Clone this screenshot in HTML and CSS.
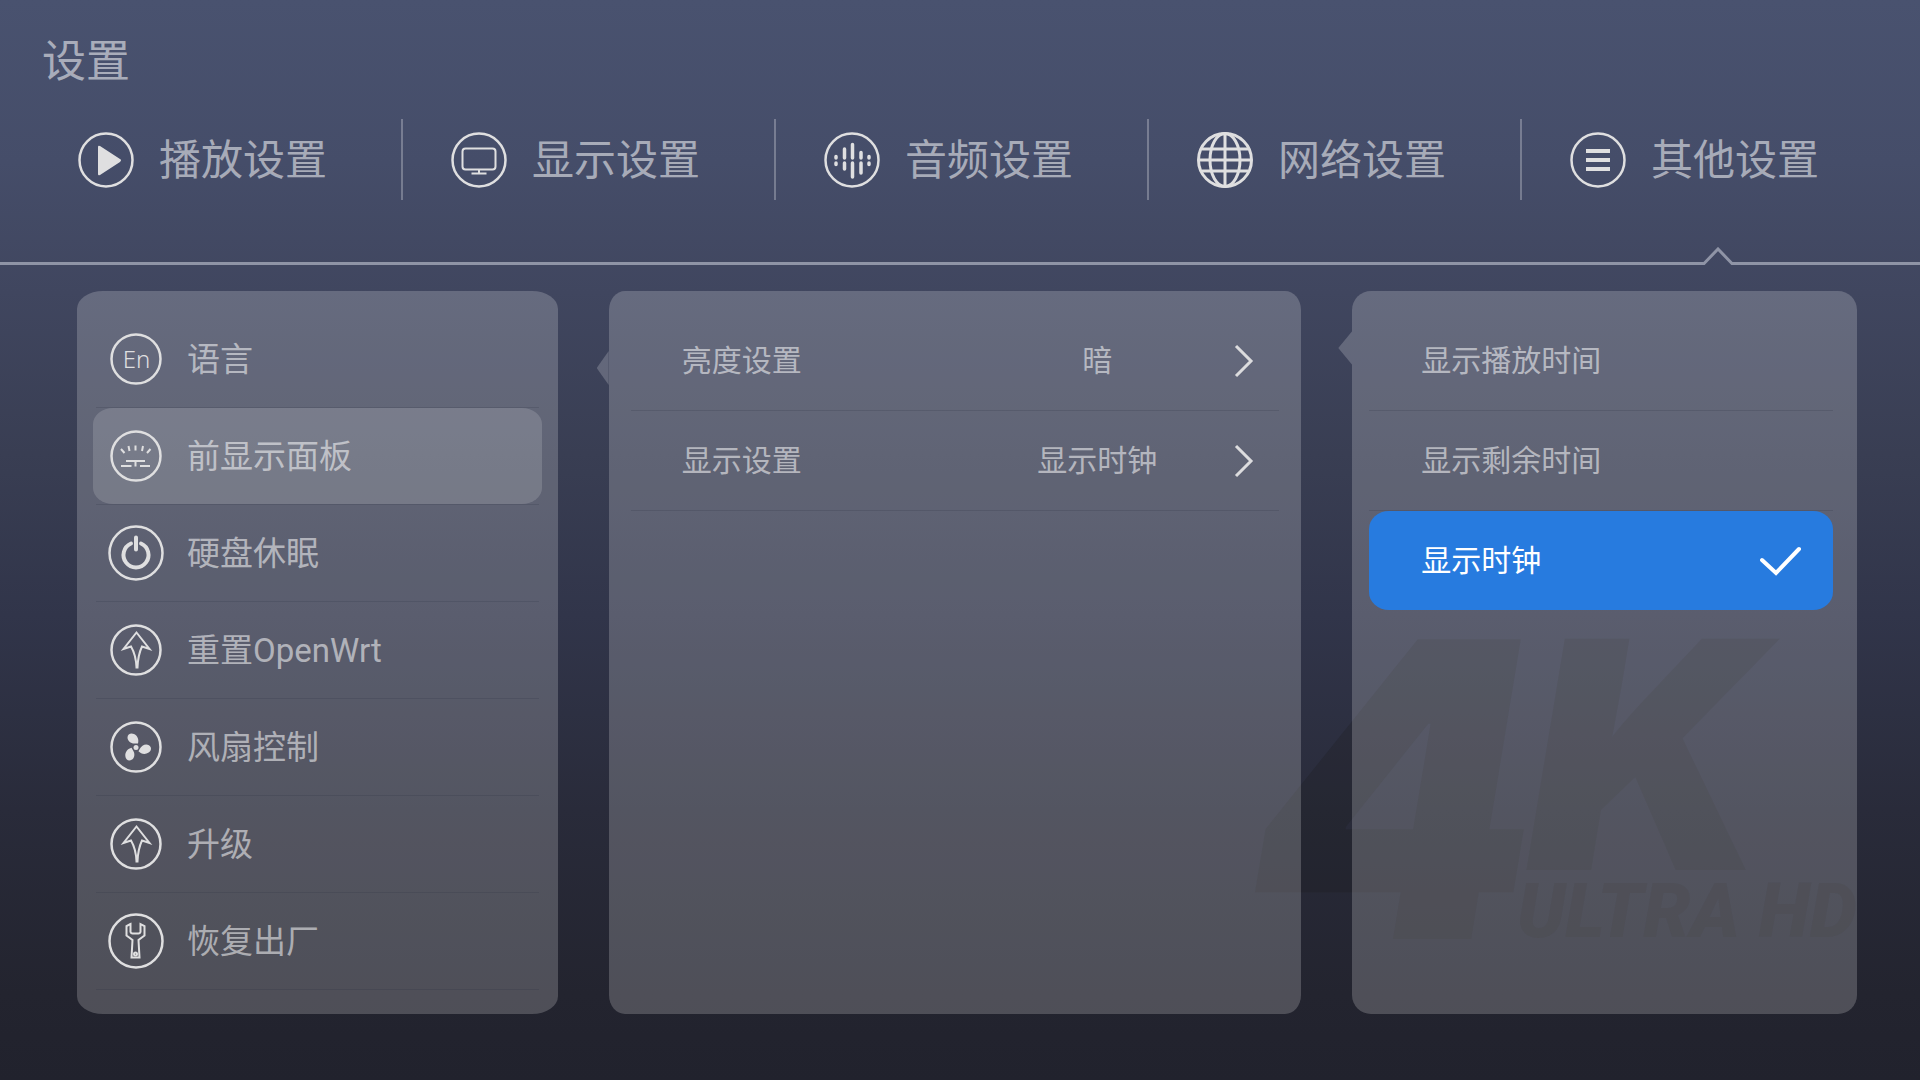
FILE: index.html
```html
<!DOCTYPE html>
<html lang="zh-CN">

<head>
    <meta charset="UTF-8">
    <meta name="viewport" content="width=device-width, initial-scale=1.0">
    <title>设置</title>
    <link rel="stylesheet" href="styles.css">
</head>

<body>
    <svg class="watermark" viewBox="0 0 640 310" aria-hidden="true">
        <text class="mark-4" x="24" y="303">4</text>
        <text class="mark-k" x="301" y="234">K</text>
        <text class="mark-hd" x="292" y="301">ULTRA HD</text>
    </svg>

    <header>
        <h1 class="title">设置</h1>
        <nav class="tabs">
            <a class="tab" href="#play">
                <svg class="icon" viewBox="0 0 56 56">
                    <circle cx="28" cy="28" r="26.5" />
                    <path class="fill" d="M20 15v27q0 2 2 1l20-13q2-2 0-3L22 14q-2-1-2 1z" />
                </svg>
                <span>播放设置</span>
            </a>
            <a class="tab" href="#display">
                <svg class="icon" viewBox="0 0 56 56">
                    <circle cx="28" cy="28" r="26.5" />
                    <rect class="thin" x="11.5" y="16.5" width="33" height="21" rx="3" />
                    <path class="thin" d="M28 38v3M20.5 41.5h15" />
                </svg>
                <span>显示设置</span>
            </a>
            <a class="tab" href="#audio">
                <svg class="icon" viewBox="0 0 56 56">
                    <circle cx="28" cy="28" r="26.5" />
                    <path class="bar" d="M12 24.5v1.5M12 31v1.5M20.500 17v9M20.500 31v6M28.5 12.5v13.500M28.5 31v14M37 20.5v5.500M37 31v10M45 24.5v1.500M45 31v1.500" />
                </svg>
                <span>音频设置</span>
            </a>
            <a class="tab" href="#network">
                <svg class="icon" viewBox="0 0 56 56">
                    <circle class="bold" cx="28" cy="28" r="26.5" />
                    <ellipse class="bold" cx="28" cy="28" rx="15" ry="26.5" />
                    <path class="bold" d="M28 2v52M2 28h52M5 17h46M5 39h46" />
                </svg>
                <span>网络设置</span>
            </a>
            <a class="tab" href="#other" aria-current="page">
                <svg class="icon" viewBox="0 0 56 56">
                    <circle cx="28" cy="28" r="26.5" />
                    <path class="menu" d="M16 19h24M16 28h24M16 37h24" />
                </svg>
                <span>其他设置</span>
            </a>
        </nav>
        <div class="rule">
            <span class="rule-left"></span>
            <svg class="notch" viewBox="0 0 30 18">
                <path d="M0 16.5h1L15 2l14 14.5h1" />
            </svg>
            <span class="rule-right"></span>
        </div>
    </header>

    <main>
        <section class="panel panel-menu">
            <ul>
                <li>
                    <button class="row" type="button">
                        <svg class="icon" viewBox="0 0 56 56">
                            <circle cx="28" cy="28" r="24.5" />
                            <text x="28.5" y="37" text-anchor="middle">En</text>
                        </svg>
                        <span>语言</span>
                    </button>
                </li>
                <li>
                    <button class="row active" type="button">
                        <svg class="icon" viewBox="0 0 56 56">
                            <circle cx="28" cy="28" r="24.5" />
                            <path class="thin" d="M13 21l3.500 4M20.500 18l1 5M27.500 17.500v5M35 18l-1 5M42.500 21l-3.500 4M18 33h19M27.500 33v5.500M13 38h10.500M32 38h10" />
                        </svg>
                        <span>前显示面板</span>
                    </button>
                </li>
                <li>
                    <button class="row" type="button">
                        <svg class="icon" viewBox="0 0 56 56">
                            <circle cx="28" cy="28" r="26.5" />
                            <path class="power" d="M28 12.5v12M23 18.500a12.500 12.500 0 1 0 10 0" />
                        </svg>
                        <span>硬盘休眠</span>
                    </button>
                </li>
                <li>
                    <button class="row" type="button">
                        <svg class="icon" viewBox="0 0 56 56">
                            <circle cx="28" cy="28" r="24.5" />
                            <path class="thin" d="M28.5 10.500L41.500 27L34 24.500Q30 33 29.500 45.500H28.500Q28 33 23 24.500L15.500 27z" />
                        </svg>
                        <span>重置OpenWrt</span>
                    </button>
                </li>
                <li>
                    <button class="row" type="button">
                        <svg class="icon" viewBox="0 0 56 56">
                            <circle cx="28" cy="28" r="24.5" />
                            <circle class="fill" cx="28" cy="28.5" r="2.5" />
                            <path class="fill" d="M27.500 24.500C23 25 19.500 22 19.500 18.500C19.500 15 23 13.500 26 15C30 17 31 21 30 24.500z" />
                            <path class="fill" transform="rotate(120 28 28.5)" d="M27.500 24.500C23 25 19.500 22 19.500 18.500C19.500 15 23 13.500 26 15C30 17 31 21 30 24.500z" />
                            <path class="fill" transform="rotate(240 28 28.5)" d="M27.500 24.500C23 25 19.500 22 19.500 18.500C19.500 15 23 13.500 26 15C30 17 31 21 30 24.500z" />
                        </svg>
                        <span>风扇控制</span>
                    </button>
                </li>
                <li>
                    <button class="row" type="button">
                        <svg class="icon" viewBox="0 0 56 56">
                            <circle cx="28" cy="28" r="24.5" />
                            <path class="thin" d="M28.5 10.500L41.500 27L34 24.500Q30 33 29.500 45.500H28.500Q28 33 23 24.500L15.500 27z" />
                        </svg>
                        <span>升级</span>
                    </button>
                </li>
                <li>
                    <button class="row" type="button">
                        <svg class="icon" viewBox="0 0 56 56">
                            <circle cx="28" cy="28" r="26.5" />
                            <path class="thin" d="M22.500 11L18.500 13V22.500L24.500 27L23.500 44.500H31.500L30.500 27L36.500 22.500V13L32.500 11V19Q32 20.500 30.500 20.500H24.500Q23 20.500 22.500 19z" />
                            <circle class="thin" cx="27.5" cy="41" r="1.5" />
                        </svg>
                        <span>恢复出厂</span>
                    </button>
                </li>
            </ul>
        </section>

        <section class="panel panel-options">
            <ul>
                <li>
                    <button class="row" type="button">
                        <span class="name">亮度设置</span>
                        <span class="value">暗</span>
                        <svg class="chevron" viewBox="0 0 24 34">
                            <path d="M4 2l15 15L4 32" />
                        </svg>
                    </button>
                </li>
                <li>
                    <button class="row" type="button">
                        <span class="name">显示设置</span>
                        <span class="value">显示时钟</span>
                        <svg class="chevron" viewBox="0 0 24 34">
                            <path d="M4 2l15 15L4 32" />
                        </svg>
                    </button>
                </li>
            </ul>
        </section>

        <section class="panel panel-choices">
            <ul>
                <li>
                    <label class="row">
                        <input type="radio" name="front-display">
                        <span>显示播放时间</span>
                    </label>
                </li>
                <li>
                    <label class="row">
                        <input type="radio" name="front-display">
                        <span>显示剩余时间</span>
                    </label>
                </li>
                <li>
                    <label class="row selected">
                        <input type="radio" name="front-display" checked>
                        <span>显示时钟</span>
                        <svg class="check" viewBox="0 0 42 30">
                            <path d="M2 14l14 13L39 3" />
                        </svg>
                    </label>
                </li>
            </ul>
        </section>
    </main>
</body>

</html>
```

FILE: styles.css
```css
* {
    box-sizing: border-box;
}

body {
    position: relative;
    display: flex;
    flex-direction: column;
    min-height: 100vh;
    margin: 0;
    overflow-x: hidden;
    background: linear-gradient(#49526f 0%, #454d69 15%, #40465f 27%, #393e53 42%, #31354a 57%, #292b3a 75%, #23242f 92%, #21222d 100%);
    color: rgba(255, 255, 255, 0.54);
    font-family: Roboto, "Noto Sans CJK SC", sans-serif;
}

ul {
    margin: 0;
    padding: 0;
    list-style: none;
}

/* header */

.title {
    margin: 0;
    padding: 32px 42px 0;
    font-size: 44px;
    font-weight: 400;
    line-height: 60px;
}

.tabs {
    display: flex;
    margin: 27px 25px 0 30px;
}

.tab {
    display: flex;
    flex: 1;
    align-items: center;
    gap: 25px;
    height: 81px;
    padding-left: 48px;
    border-right: 2px solid rgba(255, 255, 255, 0.27);
    color: inherit;
    font-size: 42px;
    line-height: 60px;
    text-decoration: none;
    white-space: nowrap;
}

.tab span {
    padding-top: 3px;
}

.tab:last-child {
    border-right-color: transparent;
}

.rule {
    display: flex;
    align-items: flex-end;
    margin-top: 47px;
}

.rule-left,
.rule-right {
    height: 3px;
    background: #8f94a6;
}

.rule-left {
    flex: 1;
}

.rule-right {
    width: 187px;
}

.notch {
    width: 30px;
    height: 18px;
    fill: none;
    stroke: #8f94a6;
    stroke-width: 3;
}

/* icons */

.icon {
    flex: none;
    width: 56px;
    height: 56px;
    fill: none;
    stroke: #dfdfe0;
    stroke-width: 2.5;
}

.icon .thin {
    stroke-width: 2;
}

.icon .bold {
    stroke-width: 3;
}

.icon .bar {
    stroke-width: 3.5;
    stroke-linecap: round;
}

.icon .menu {
    stroke-width: 4;
}

.icon .power {
    stroke-width: 4;
    stroke-linecap: round;
}

.icon .fill {
    fill: #dfdfe0;
    stroke: none;
}

.icon text {
    fill: #dfdfe0;
    stroke: none;
    font-family: "Noto Sans", sans-serif;
    font-size: 24px;
    font-weight: 300;
}

/* panels */

main {
    display: grid;
    flex: 1;
    grid-template-columns: 481fr 693fr 505fr;
    gap: 51px;
    padding: 26px 63px 66px 77px;
}

.panel {
    position: relative;
    background: rgba(255, 255, 255, 0.2);
}

.panel li::after {
    content: "";
    display: block;
    height: 1px;
    background: rgba(40, 42, 60, 0.18);
}

.row {
    display: flex;
    align-items: center;
    width: 100%;
    height: 99px;
    margin: 0;
    padding: 0;
    border: 0;
    background: none;
    color: rgba(255, 255, 255, 0.54);
    font-family: inherit;
    font-size: 30px;
    line-height: 44px;
    text-align: left;
    white-space: nowrap;
    cursor: pointer;
}

.panel-menu {
    padding: 20px 16px 24px;
    border-radius: 26px / 18px;
}

.panel-menu li::after {
    margin: 0 3px;
}

.panel-menu .row {
    gap: 23px;
    height: 96px;
    padding-left: 15px;
    font-size: 33px;
}

.panel-menu .row span {
    padding-top: 2px;
}

.panel-menu .active {
    border-radius: 20px / 16px;
    background: rgba(255, 255, 255, 0.15);
}

.panel-options {
    padding: 20px 22px;
    border-radius: 16px / 19px;
}

.panel-options .row {
    gap: 35px;
    padding: 0 23px 0 51px;
}

.name {
    flex: 1;
}

.value {
    width: 200px;
    text-align: center;
}

.chevron {
    width: 24px;
    height: 34px;
    fill: none;
    stroke: #dcdcde;
    stroke-width: 3;
}

.panel-choices {
    padding: 20px 24px 20px 17px;
    border-radius: 19px;
}

.panel-choices .row {
    justify-content: space-between;
    padding: 0 31px 0 52px;
}

.panel-choices input {
    position: absolute;
    opacity: 0;
}

.panel-choices .selected {
    border-radius: 20px / 18px;
    background: #277bdf;
    color: #fff;
}

.panel-choices li:last-child::after {
    display: none;
}

.check {
    width: 42px;
    height: 30px;
    fill: none;
    stroke: #fff;
    stroke-width: 4;
    stroke-linecap: round;
}

/* pointers to the parent row */

.panel-options::before,
.panel-choices::before {
    content: "";
    position: absolute;
    right: 100%;
    width: 12px;
    height: 34px;
    background: inherit;
    clip-path: polygon(100% 0, 100% 100%, 0 50%);
}

.panel-options::before {
    top: 60px;
}

.panel-choices::before {
    top: 40px;
    width: 14px;
}

/* background mark */

.watermark {
    position: absolute;
    right: 55px;
    bottom: 134px;
    width: 640px;
    height: 310px;
    overflow: visible;
    fill: rgba(20, 22, 18, 0.18);
    font-style: italic;
    font-weight: 900;
}

.mark-4 {
    font-family: Inter, sans-serif;
    font-size: 412px;
}

.mark-k {
    font-family: Inter, sans-serif;
    font-size: 318px;
}

.mark-hd {
    font-family: Roboto, sans-serif;
    font-size: 75px;
}
```
